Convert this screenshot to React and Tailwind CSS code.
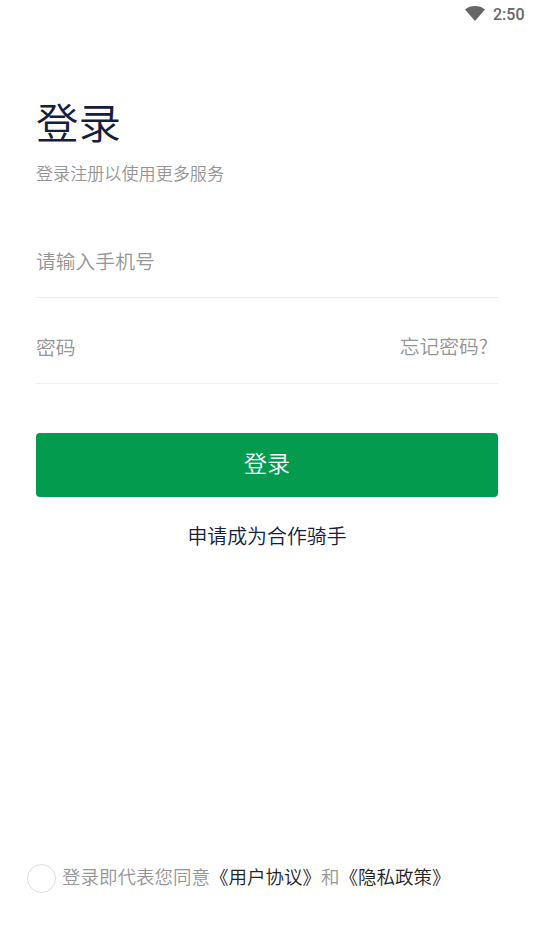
export default function App() {
  return (
    <main className="flex h-[949px] w-[534px] flex-col overflow-hidden bg-white font-['Noto_Sans_CJK_SC',sans-serif] font-[350] text-[#959595]">
      <header className="flex h-7 items-center justify-end gap-2 pr-[9.5px] text-[#666]">
        <svg className="mb-[2px] h-[15px] w-5" viewBox="0 0 20 15" fill="currentColor" aria-hidden="true">
          <path d="M10 0C6.2 0 2.8 1.2 0 3.4L10 15 20 3.4C17.2 1.2 13.8 0 10 0Z" />
        </svg>
        <span className="pt-px font-['Roboto',sans-serif] text-base font-medium leading-7">2:50</span>
      </header>
      <section className="flex flex-col px-9">
        <h1 className="mt-[62px] h-[62px] text-[42.5px] font-[350] leading-[62px] text-[#14203b]">登录</h1>
        <p className="mt-[9px] h-6 text-[17.1px] leading-6">登录注册以使用更多服务</p>
        <div className="mt-[52px] flex h-[61px] border-b border-[#ebebeb] pt-[9px] text-[19.8px] leading-[30px]">请输入手机号</div>
        <div className="flex h-[86px] justify-between border-b border-[#efefef] pt-[34px] pr-[10px] text-[19.8px] leading-[30px]">
          <span>密码</span>
          <button className="-mt-px h-[30px]">忘记密码?</button>
        </div>
        <button className="mt-[49px] h-16 rounded bg-[#039b4e] pb-[6px] text-[23px] leading-[58px] text-white">登录</button>
        <a className="mt-6 text-center text-[19.9px] leading-[30px] text-[#14203b]">申请成为合作骑手</a>
      </section>
      <footer className="mt-auto mb-14 flex h-[30px] items-center gap-[6.5px] pl-[26.5px] text-[18.5px] leading-[30px]">
        <span className="mt-px size-[29px] rounded-full border border-[#ddd]" />
        <p className="-mt-[4px]">登录即代表您同意<span className="text-[#222]">《用户协议》</span>和<span className="text-[#222]">《隐私政策》</span></p>
      </footer>
    </main>
  );
}
